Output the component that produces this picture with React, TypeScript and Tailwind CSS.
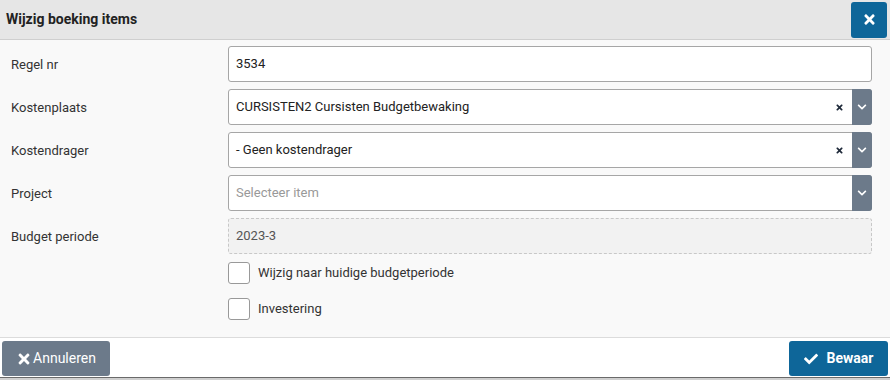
import React from "react";
import { FaTimes, FaCheck, FaChevronDown } from "react-icons/fa";

function Label({ children }: { children: React.ReactNode }) {
  return (
    <div className="w-[228px] shrink-0 pl-[11px] text-[13px] text-[#333] leading-none">{children}</div>
  );
}

function SelectBox({ value, placeholder, clear }: { value?: string; placeholder?: string; clear?: boolean }) {
  return (
    <div className="flex h-[36px] w-[644px] rounded-[3px] border border-[#a6a6a6] bg-white">
      <div className="flex flex-1 items-center pl-[7px] text-[13px]">
        {value ? <span className="text-[#222]">{value}</span> : <span className="text-[#999]">{placeholder}</span>}
      </div>
      {clear && (
        <div className="flex w-[26px] items-center justify-center text-[#1f2a3a]">
          <FaTimes size={9} />
        </div>
      )}
      <div className="-my-px -mr-px flex w-[20px] items-center justify-center rounded-r-[3px] bg-[#6c7a8a] text-white">
        <FaChevronDown size={10} />
      </div>
    </div>
  );
}

export default function App() {
  return (
    <div className="h-[380px] w-[890px] overflow-hidden bg-[#f9f9f9]" style={{ fontFamily: "Roboto, 'Liberation Sans', sans-serif" }}>
      <div className="flex h-[40px] items-center justify-between border-b border-[#cfcfcf] bg-[#e6e6e6] pl-[6px] pr-[3px]">
        <div className="text-[14px] font-bold text-[#222]">Wijzig boeking items</div>
        <div className="flex h-[36px] w-[36px] items-center justify-center rounded-[3px] bg-[#0e6699] text-white">
          <FaTimes size={15} />
        </div>
      </div>
      <div className="flex h-[297px] flex-col bg-[#f9f9f9] pt-[6px]">
        <div className="flex items-center">
          <Label>Regel nr</Label>
          <div className="flex h-[36px] w-[644px] items-center rounded-[3px] border border-[#a6a6a6] bg-white pl-[7px] text-[13px] text-[#222]">3534</div>
        </div>
        <div className="mt-[7px] flex items-center">
          <Label>Kostenplaats</Label>
          <SelectBox value="CURSISTEN2 Cursisten Budgetbewaking" clear />
        </div>
        <div className="mt-[7px] flex items-center">
          <Label>Kostendrager</Label>
          <SelectBox value="- Geen kostendrager" clear />
        </div>
        <div className="mt-[7px] flex items-center">
          <Label>Project</Label>
          <SelectBox placeholder="Selecteer item" />
        </div>
        <div className="mt-[7px] flex items-center">
          <Label>Budget periode</Label>
          <div className="flex h-[36px] w-[644px] items-center rounded-[3px] border border-dashed border-[#c8c8c8] bg-[#f2f2f2] pl-[7px] text-[13px] text-[#555]">2023-3</div>
        </div>
        <div className="mt-[8px] flex items-center pl-[228px]">
          <div className="h-[22px] w-[22px] rounded-[3px] border border-[#999] bg-white" />
          <span className="ml-[8px] text-[13px] text-[#333]">Wijzig naar huidige budgetperiode</span>
        </div>
        <div className="mt-[14px] flex items-center pl-[228px]">
          <div className="h-[22px] w-[22px] rounded-[3px] border border-[#999] bg-white" />
          <span className="ml-[8px] text-[13px] text-[#333]">Investering</span>
        </div>
      </div>
      <div className="flex h-[40px] items-start justify-between border-t border-[#dcdcdc] bg-white px-[2px] pt-[3px]">
        <div className="flex h-[35px] w-[108px] items-center justify-center gap-[1px] rounded-[3px] bg-[#6c7a8a] text-[14px] text-white">
          <FaTimes size={16} />
          <span>Annuleren</span>
        </div>
        <div className="flex h-[35px] w-[99px] items-center justify-center gap-[9px] rounded-[3px] bg-[#0e6699] text-[14px] font-bold text-white">
          <FaCheck size={14} />
          <span>Bewaar</span>
        </div>
      </div>
      <div className="h-[3px] border-t border-[#6a6a6a] bg-[#cfcfcf]" />
    </div>
  );
}
